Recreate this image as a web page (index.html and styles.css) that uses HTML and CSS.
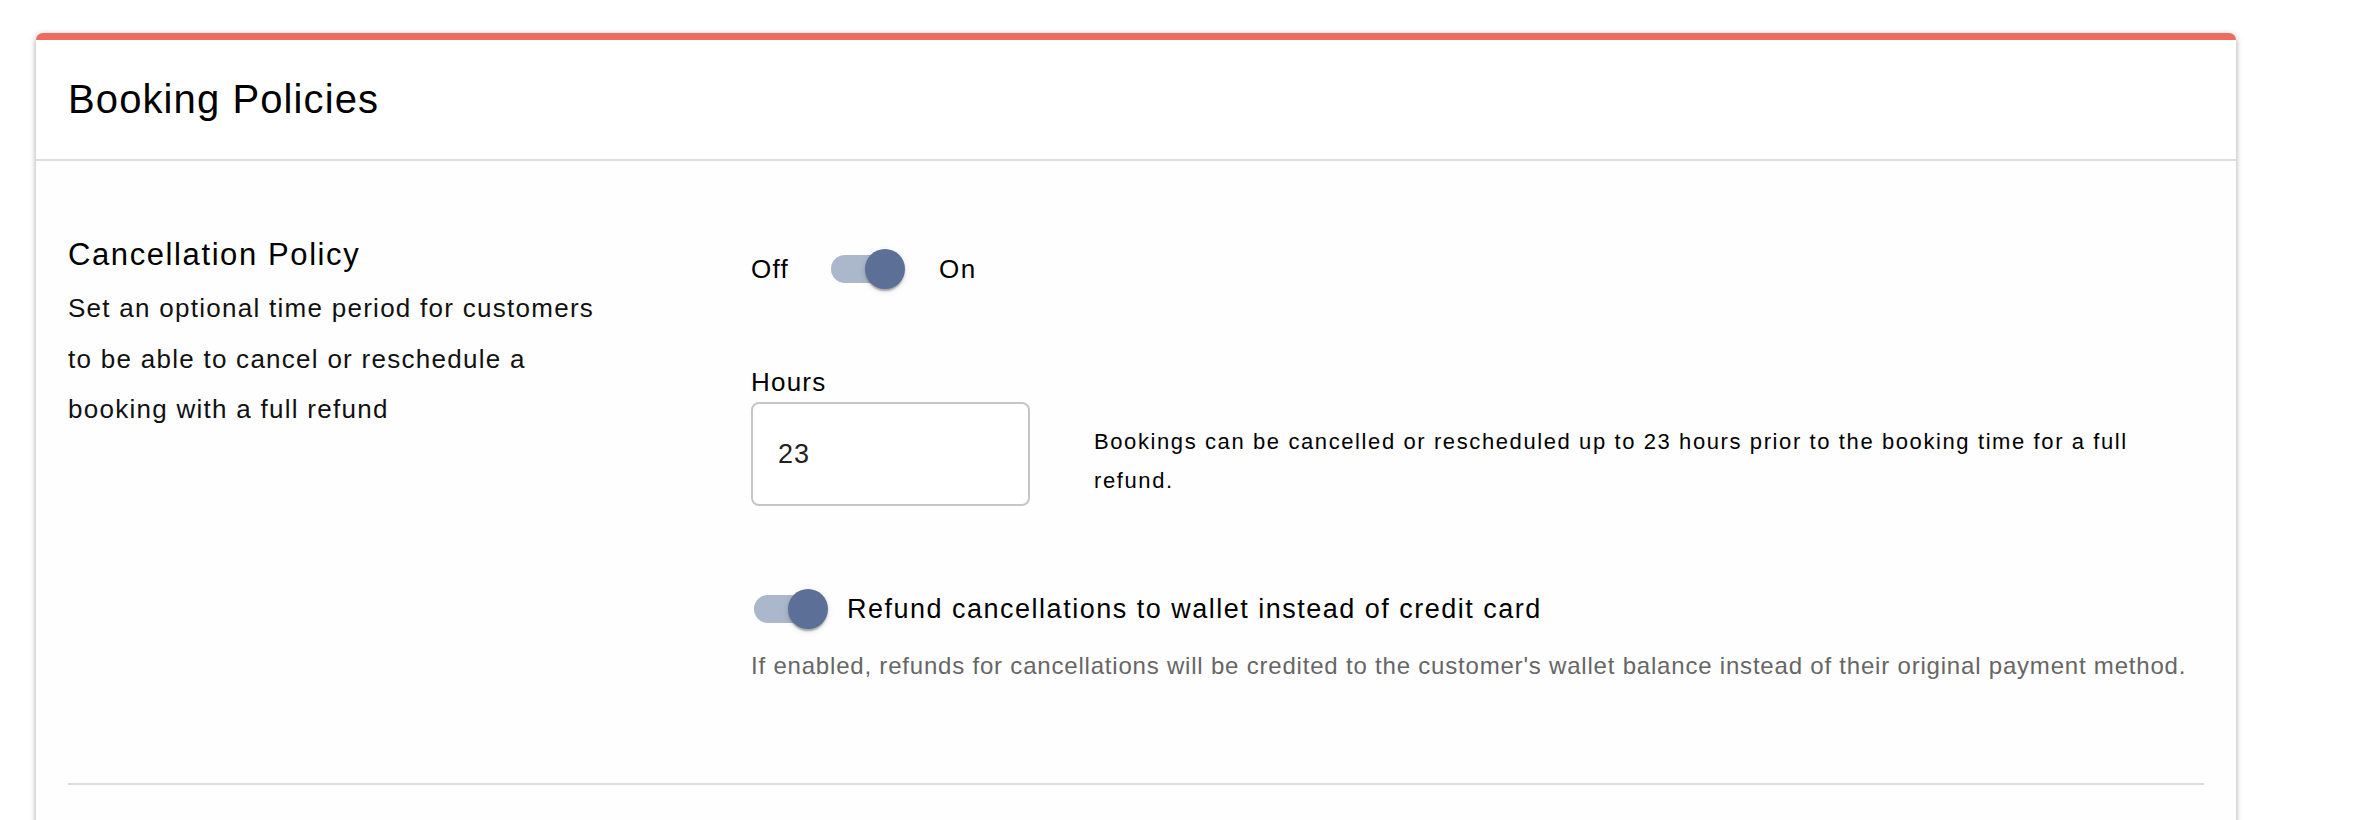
FILE: index.html
```html
<!DOCTYPE html>
<html lang="en">
<head>
<meta charset="utf-8">
<title>Booking Policies</title>
<link rel="stylesheet" href="styles.css">
</head>
<body>
<div class="card">
  <div class="card-header">
    <h1 class="card-title">Booking Policies</h1>
  </div>
  <div class="card-body">
    <section class="policy">
      <div class="policy-info">
        <h2 class="policy-title">Cancellation Policy</h2>
        <p class="policy-desc">Set an optional time period for customers to be able to cancel or reschedule a booking with a full refund</p>
      </div>
      <div class="policy-controls">
        <div class="toggle-row">
          <span class="toggle-text toggle-off">Off</span>
          <span class="switch"><span class="switch-track"></span><span class="switch-thumb"></span></span>
          <span class="toggle-text toggle-on">On</span>
        </div>
        <div class="hours">
          <label class="field-label">Hours</label>
          <div class="hours-row">
            <div class="field-input">23</div>
            <p class="hours-help">Bookings can be cancelled or rescheduled up to 23 hours prior to the booking time for a full refund.</p>
          </div>
        </div>
        <div class="wallet-row">
          <span class="switch switch-wallet"><span class="switch-track"></span><span class="switch-thumb"></span></span>
          <span class="wallet-label">Refund cancellations to wallet instead of credit card</span>
        </div>
        <p class="wallet-help">If enabled, refunds for cancellations will be credited to the customer's wallet balance instead of their original payment method.</p>
      </div>
    </section>
  </div>
</div>
</body>
</html>
```

FILE: styles.css
```css
html, body {
  margin: 0;
  padding: 0;
  background: #ffffff;
}

body {
  padding: 33px 0 0 36px;
  font-family: "Liberation Sans", Arial, Helvetica, sans-serif;
  color: #111;
}

.card {
  width: 2200px;
  background: #fefefe;
  border-top: 7px solid #ed6c5f;
  border-radius: 7px 7px 0 0;
  box-shadow: 0 2px 6px rgba(0, 0, 0, 0.36);
}

.card-header {
  background: #ffffff;
  padding: 35px 32px 36px;
  border-bottom: 2px solid #dedede;
}

.card-title {
  margin: 0;
  font-size: 40px;
  line-height: 48px;
  font-weight: 400;
  letter-spacing: 1.1px;
  color: #000;
}

.card-body {
  padding: 70px 32px 120px;
}

.policy {
  display: grid;
  grid-template-columns: 683px 1fr;
  padding-bottom: 101px;
  border-bottom: 2px solid #dddddd;
}

.policy-info {
  padding-top: 4px;
}

.policy-title {
  margin: 0;
  font-size: 31px;
  line-height: 40px;
  font-weight: 400;
  letter-spacing: 1.6px;
  color: #000;
}

.policy-desc {
  margin: 8px 0 0;
  max-width: 545px;
  font-size: 26px;
  line-height: 50.5px;
  letter-spacing: 1.27px;
  color: #111;
}

.policy-controls {
  display: flex;
  flex-direction: column;
  align-items: flex-start;
}

.toggle-row {
  display: flex;
  align-items: center;
  height: 76px;
}

.toggle-text {
  font-size: 26px;
  letter-spacing: 1.3px;
  color: #000;
}

.toggle-off {
  margin-right: 42px;
}

.toggle-on {
  margin-left: 40px;
}

.switch {
  position: relative;
  display: inline-block;
  width: 68px;
  height: 28px;
  flex: none;
}

.switch-track {
  display: block;
  width: 100%;
  height: 100%;
  border-radius: 14px;
  background: #abb7ca;
}

.switch-thumb {
  position: absolute;
  left: 34px;
  top: -6px;
  width: 40px;
  height: 40px;
  border-radius: 50%;
  background: #5c6f96;
  box-shadow: 0 4px 2px -2px rgba(0, 0, 0, 0.2), 0 2px 2px rgba(0, 0, 0, 0.14), 0 2px 6px rgba(0, 0, 0, 0.12);
}

.hours {
  margin-top: 60px;
  width: 100%;
}

.field-label {
  display: block;
  font-size: 26px;
  line-height: 30px;
  letter-spacing: 1.2px;
  color: #000;
}

.hours-row {
  display: flex;
  align-items: flex-start;
  margin-top: 5px;
}

.field-input {
  box-sizing: border-box;
  flex: none;
  width: 279px;
  height: 104px;
  border: 2px solid #c6c6c6;
  border-radius: 8px;
  background: #fff;
  padding-left: 25px;
  display: flex;
  align-items: center;
  font-size: 27px;
  letter-spacing: 1px;
  color: #222;
}

.hours-help {
  flex: 1;
  margin: 20px 0 0 64px;
  font-size: 22px;
  line-height: 39px;
  letter-spacing: 1.6px;
  color: #000;
}

.wallet-row {
  display: flex;
  align-items: center;
  height: 76px;
  margin-top: 65px;
  padding-left: 3px;
}

.wallet-label {
  margin-left: 25px;
  font-size: 27px;
  letter-spacing: 1.5px;
  color: #000;
}

.wallet-help {
  margin: 3px 0 0;
  font-size: 24px;
  line-height: 32px;
  letter-spacing: 0.8px;
  color: #666;
}
```
